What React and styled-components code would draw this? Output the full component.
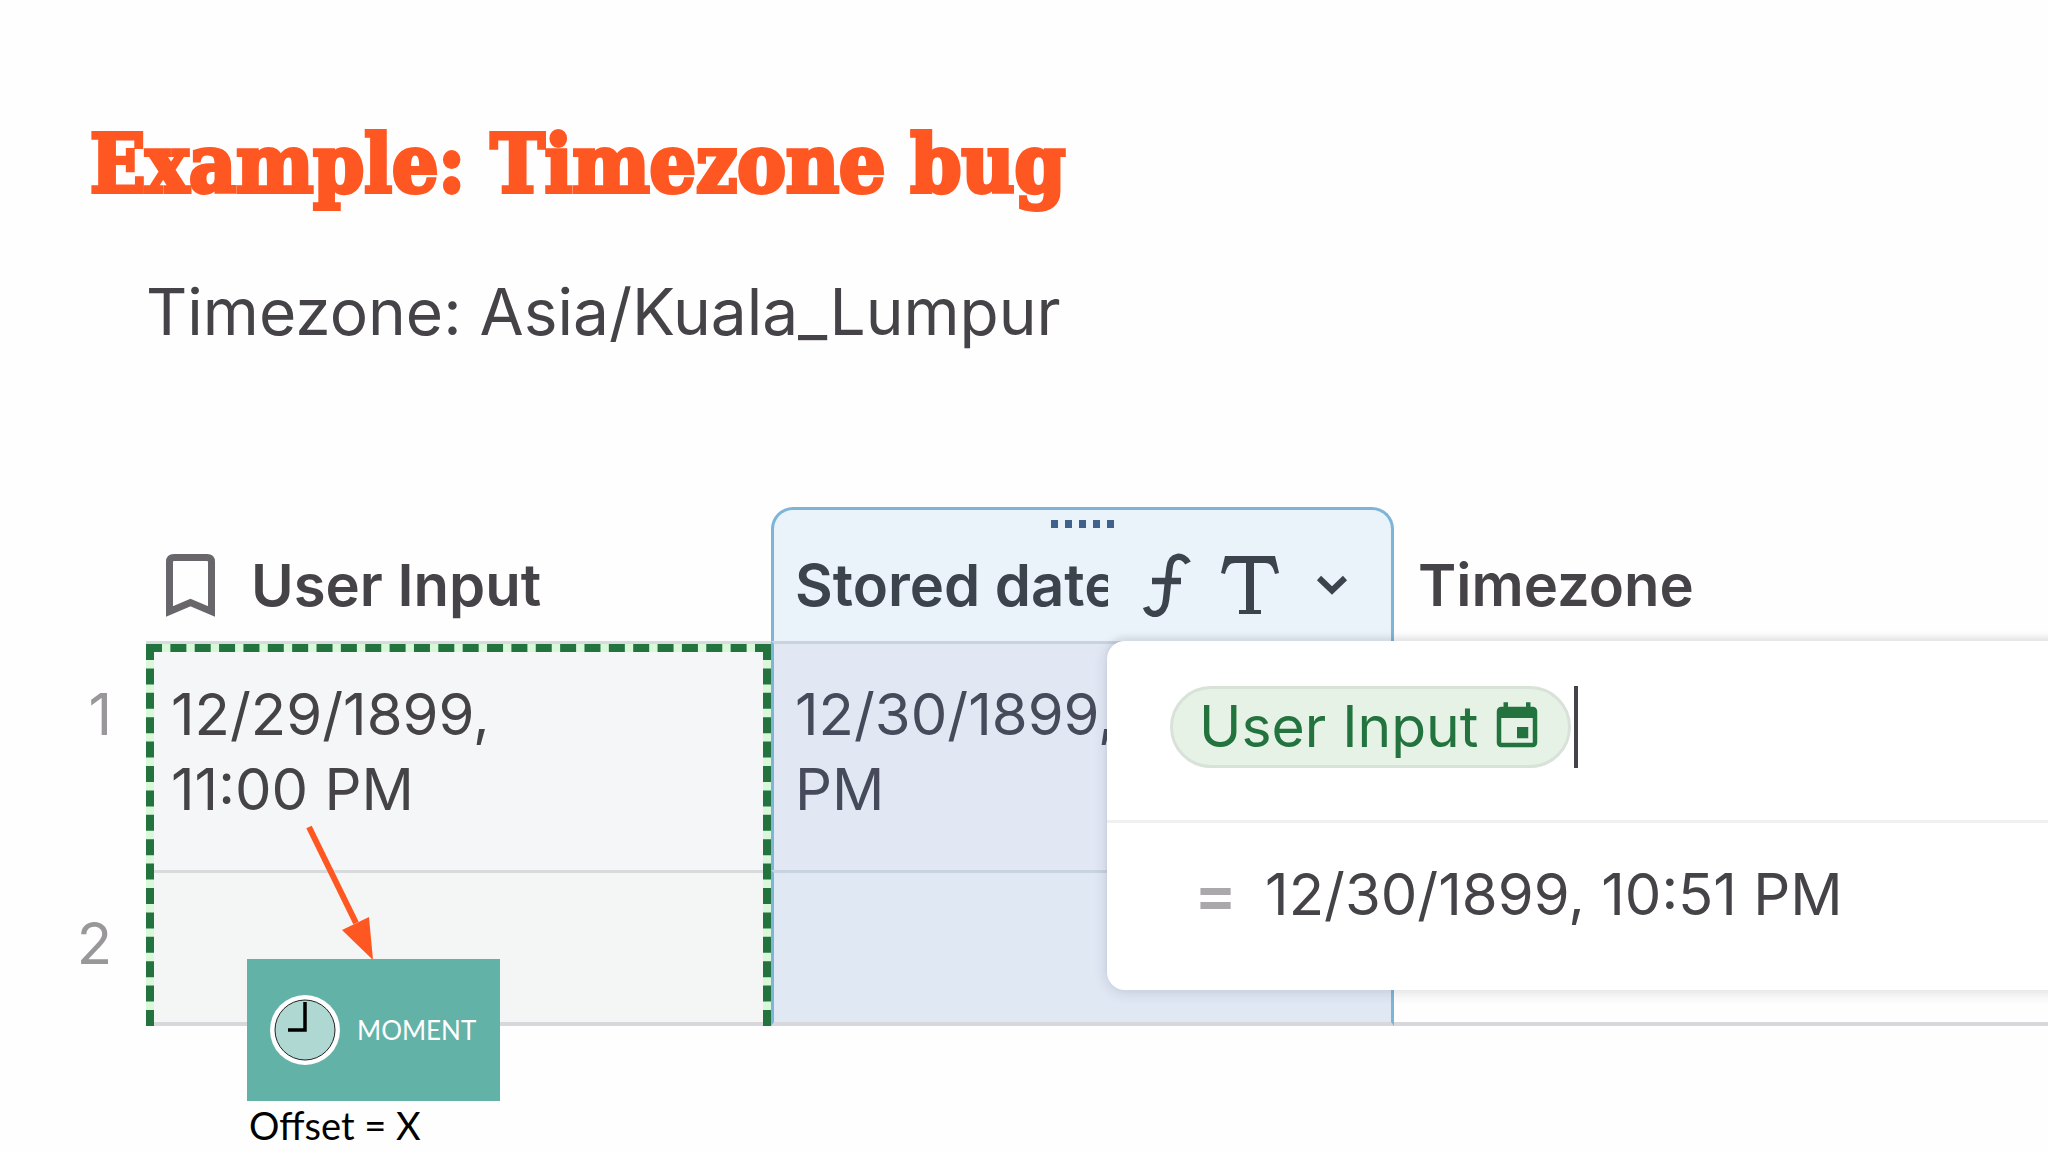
import React from 'react';
import styled, { createGlobalStyle, css } from 'styled-components';
import { MdEvent } from 'react-icons/md';

const GlobalStyle = createGlobalStyle`
	* { box-sizing: border-box; }

	body {
		margin: 0;
		background-color: #fefefe;
		color: #454347;
		font-family: Inter, "Liberation Sans", sans-serif;
	}
`;

const orange = '#ff5722';
const green = '#23733f';
const blue = '#7db5d8';

const Slide = styled.main`
	min-height: 100vh;
	padding-top: 108px;
	overflow: hidden;
`;

const Title = styled.h1`
	margin: 0;
	padding-left: 90px;
	color: ${orange};
	font: bold 81px/112px "DejaVu Serif Condensed", "DejaVu Serif", serif;
	-webkit-text-stroke: 4px ${orange};
	white-space: nowrap;
`;

const Subtitle = styled.p`
	margin: 52px 0 0;
	padding-left: 146px;
	font-size: 64px;
	line-height: 80px;
	white-space: nowrap;
`;

const Sheet = styled.section`
	position: relative;
	margin-top: 155px;
`;

const Table = styled.table`
	width: 100%;
	table-layout: fixed;
	border-collapse: separate;
	border-spacing: 0;
	text-align: left;
`;

const Col = styled.col`
	width: ${({ size }) => size ? `${size}px` : 'auto'};
`;

const selectedSides = css`
	border-left: 3px solid ${blue};
	border-right: 3px solid ${blue};
`;

const HeadCell = styled.th`
	height: 134px;
	padding: 0 0 0 ${({ selected }) => selected ? 21 : 24}px;
	font-size: 58px;
	font-weight: 600;
	line-height: 72px;
	vertical-align: top;
	white-space: nowrap;

	${({ selected }) => selected && css`
		${selectedSides}
		border-top: 3px solid ${blue};
		border-radius: 22px 22px 0 0;
		background-color: #eaf3fa;
		color: #3c434c;
	`}
`;

const HeadContent = styled.div`
	display: flex;
	align-items: center;
	padding-top: 42px;

	> svg {
		flex: none;
		margin: 0 36px 0 -4px;
	}
`;

const DragHandle = styled.div`
	display: flex;
	justify-content: center;
	gap: 7px;
	height: 18px;
	padding: 10px 21px 0 0;

	& + ${HeadContent} { padding-top: 21px; }
`;

const Dot = styled.span`
	width: 7px;
	height: 8px;
	background-color: #3f618c;
`;

const ClippedLabel = styled.span`
	width: 313px;
	overflow: hidden;
`;

const IconButton = styled.button`
	display: flex;
	margin: 0 0 0 ${({ gap }) => gap}px;
	padding: 0;
	border: none;
	background-color: transparent;
	color: inherit;
	cursor: pointer;
`;

const RowNumber = styled.th`
	height: ${({ tall }) => tall ? 229 : 156}px;
	padding: 36px 34px 0 0;
	color: #99979a;
	font-size: 58px;
	font-weight: 400;
	line-height: 75px;
	text-align: right;
	vertical-align: top;
`;

const Cell = styled.td`
	padding: 33px 0 0 ${({ selected }) => selected ? 21 : 25}px;
	border-top: 3px solid #d8dbdc;
	background-color: ${({ tint }) => tint || 'transparent'};
	font-size: 58px;
	line-height: 75px;
	vertical-align: top;
	white-space: pre;

	${({ selected }) => selected && css`
		${selectedSides}
		color: #474a5a;
		border-top-color: #c9d3df;
	`}

	tr:last-child > & { border-bottom: 4px solid #d8d8dc; }
`;

// dashed frame drawn over the referenced column
const ReferenceFrame = styled.div`
	position: absolute;
	top: 137px;
	bottom: 0;
	left: 146px;
	width: 625px;
	border: 8px solid #d9f8da;
	border-bottom: none;

	&::after {
		content: '';
		position: absolute;
		inset: -8px -8px 0;
		border: 8px dashed ${green};
		border-bottom: none;
	}
`;

const Popup = styled.div`
	position: absolute;
	top: 134px;
	right: -40px;
	left: 1107px;
	border-radius: 18px;
	background-color: #fff;
	box-shadow: 0 2px 14px rgba(40, 40, 60, 0.16), 0 -5px 4px rgba(60, 50, 60, 0.06);
`;

const FormulaRow = styled.div`
	display: flex;
	align-items: center;
	gap: 3px;
	height: 182px;
	padding: 0 63px 8px;
	border-bottom: 3px solid #f0eff2;
`;

const Pill = styled.span`
	display: flex;
	align-items: center;
	gap: 12px;
	height: 82px;
	padding: 0 24px 0 26px;
	border: 3px solid #d8e2d8;
	border-radius: 41px;
	background-color: #e7f2e6;
	color: ${green};
	font-size: 57px;
	white-space: nowrap;
`;

const Caret = styled.span`
	width: 4px;
	height: 82px;
	background-color: #454347;
`;

const FormulaInput = styled.input`
	flex: 1;
	min-width: 0;
	border: none;
	outline: none;
	background-color: transparent;
	color: inherit;
	font: inherit;
	font-size: 57px;
`;

const ResultRow = styled.div`
	display: flex;
	align-items: center;
	gap: 28px;
	height: 167px;
	padding: 0 87px 26px;
	font-size: 58px;
	white-space: nowrap;
`;

const EqualSign = styled.span`
	color: #aaa8ab;
	font-size: 64px;
	font-weight: 600;
`;

const Arrow = styled.svg`
	position: absolute;
	top: 315px;
	left: 300px;
`;

const Library = styled.figure`
	position: absolute;
	top: 452px;
	left: 247px;
	width: 253px;
	margin: 0;
	font-family: Lato, sans-serif;
`;

const Logo = styled.div`
	display: flex;
	align-items: center;
	gap: 16px;
	height: 142px;
	padding-left: 22px;
	background-color: #63b2a8;
	color: #fff;
	font-size: 26px;
`;

const Caption = styled.figcaption`
	padding-left: 2px;
	color: #000;
	font-size: 38px;
	line-height: 48px;
	white-space: nowrap;
`;

const BookmarkIcon = () => (
	<svg width="49" height="63" viewBox="0 0 49 63" fill="none" stroke="#68666a" strokeWidth="7">
		<path d="M3.5 57.500V8Q3.500 3.500 8 3.500H41Q45.500 3.500 45.500 8V57.500L24.500 48.500Z" />
	</svg>
);

const FormulaIcon = () => (
	<svg width="48" height="64" viewBox="0 0 48 64" fill="none" stroke="currentColor" strokeWidth="6.500">
		<path d="M45 10C40 1 28 1 26.500 15L23 47C21.500 63 7 65 3 54M9 28H38" />
	</svg>
);

const TextTypeIcon = () => (
	<svg width="58" height="60" viewBox="0 0 58 60" fill="currentColor">
		<path d="M4 1H54L58 18L54 19C52 11 49 8 44 8H33V55H40V59H18V55H25V8H14C9 8 6 11 4 19L0 18Z" />
	</svg>
);

const ChevronIcon = () => (
	<svg width="32" height="22" viewBox="0 0 32 22" fill="none" stroke="currentColor" strokeWidth="6">
		<path d="M3 4L16 16.500L29 4" />
	</svg>
);

const ClockIcon = () => (
	<svg width="72" height="72" viewBox="0 0 72 72">
		<circle cx="36" cy="36" r="35" fill="#fff" />
		<circle cx="36" cy="36" r="30" fill="#afd8d2" stroke="#222" strokeWidth="1" />
		<path d="M36 8V36H19" fill="none" stroke="#000" strokeWidth="3.500" />
	</svg>
);

const App = () => (
	<Slide>
		<GlobalStyle />
		<Title>Example: Timezone bug</Title>
		<Subtitle>Timezone: Asia/Kuala_Lumpur</Subtitle>

		<Sheet>
			<Table>
				<colgroup>
					<Col size={146} />
					<Col size={625} />
					<Col size={623} />
					<Col />
				</colgroup>
				<thead>
					<tr>
						<td />
						<HeadCell scope="col">
							<HeadContent><BookmarkIcon />User Input</HeadContent>
						</HeadCell>
						<HeadCell scope="col" selected>
							<DragHandle>
								{[0, 1, 2, 3, 4].map(i => <Dot key={i} />)}
							</DragHandle>
							<HeadContent>
								<ClippedLabel>Stored date</ClippedLabel>
								<IconButton gap={35} aria-label="Formula"><FormulaIcon /></IconButton>
								<IconButton gap={30} aria-label="Column type"><TextTypeIcon /></IconButton>
								<IconButton gap={37} aria-label="Column options"><ChevronIcon /></IconButton>
							</HeadContent>
						</HeadCell>
						<HeadCell scope="col">
							<HeadContent>Timezone</HeadContent>
						</HeadCell>
					</tr>
				</thead>
				<tbody>
					<tr>
						<RowNumber scope="row" tall>1</RowNumber>
						<Cell tint="#f4f6f7">{'12/29/1899,\n11:00 PM'}</Cell>
						<Cell tint="#e1e8f4" selected>{'12/30/1899,\nPM'}</Cell>
						<Cell />
					</tr>
					<tr>
						<RowNumber scope="row">2</RowNumber>
						<Cell tint="#f3f6f4" />
						<Cell tint="#e0e8f4" selected />
						<Cell />
					</tr>
				</tbody>
			</Table>

			<ReferenceFrame />

			<Popup>
				<FormulaRow>
					<Pill>User Input<MdEvent size={54} /></Pill>
					<Caret />
					<FormulaInput type="text" aria-label="Formula" />
				</FormulaRow>
				<ResultRow>
					<EqualSign>=</EqualSign>
					<output>12/30/1899, 10:51 PM</output>
				</ResultRow>
			</Popup>

			<Arrow width="80" height="140" viewBox="0 0 80 140">
				<path d="M9 5L56 101" stroke={orange} strokeWidth="6" />
				<path d="M42 108L69 95L73 138Z" fill={orange} />
			</Arrow>

			<Library>
				<Logo><ClockIcon />MOMENT</Logo>
				<Caption>Offset = X</Caption>
			</Library>
		</Sheet>
	</Slide>
);

export default App;
